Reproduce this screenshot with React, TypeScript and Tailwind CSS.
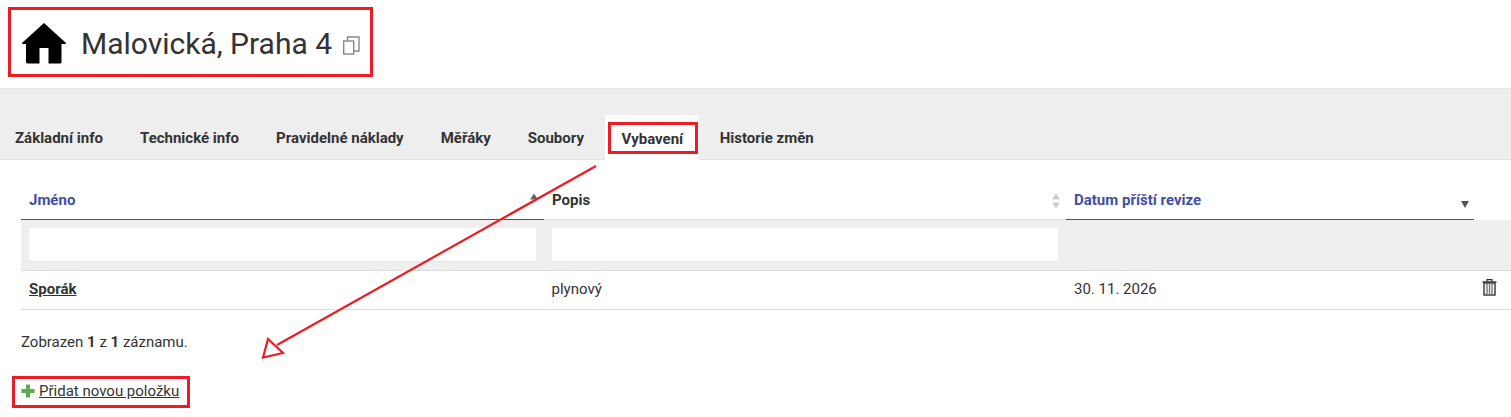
import React from 'react';

const tabs = ['Základní info', 'Technické info', 'Pravidelné náklady', 'Měřáky', 'Soubory', 'Vybavení', 'Historie změn'];

const SortIcon: React.FC<{ up?: string; down?: string }> = ({ up = '#cccccc', down = '#cccccc' }) => (
	<svg width="10" height="16" viewBox="0 0 10 16">
		<path d="M5 0.5 L9 6.5 H1 Z" fill={up} />
		<path d="M5 15.5 L9 9.5 H1 Z" fill={down} />
	</svg>
);

const App: React.FC = () => {
	return (
		<main className="relative h-[417px] w-[1511px] overflow-hidden bg-white font-['Roboto',sans-serif] text-[15px] leading-5 text-[#333333]">
			<header className="flex h-[89px] items-center border-b border-[#e6e6e6] pl-[21.5px]">
				<svg width="44" height="41" viewBox="0 0 44 41" className="mt-[-1px]">
					<path
						d="M22 0 L44 20 Q44 21 43 21 H39.5 V39 Q39.5 40.5 38 40.5 H26.5 V25 H17.5 V40.5 H6 Q4 40.5 4 39 V21 H1 Q0 21 0 20 Z"
						fill="#000000"
					/>
				</svg>
				<h1 className="ml-[15.5px] text-[30px] leading-none font-normal">Malovická, Praha 4</h1>
				<svg width="17" height="19" viewBox="0 0 17 19" className="mt-[3px] ml-[11px]" fill="none" stroke="#888888" strokeWidth="1.4">
					<path d="M4.5 4.5 V1 H16 V15 H10.5" />
					<rect x="0.7" y="5" width="10" height="13" fill="#ffffff" />
				</svg>
			</header>

			<nav className="flex h-[71px] items-end border-b border-[#e3e3e3] bg-[#eeeeee] pl-[15px]">
				{tabs.map((tab) =>
					tab === 'Vybavení' ? (
						<div key={tab} className="mr-[20.5px] mb-[-1px] ml-[-16px] flex h-[45px] items-center bg-white pt-[3px] pr-[16px] pl-[16.5px] leading-none font-bold">
							{tab}
						</div>
					) : (
						<div key={tab} className="mr-[37px] flex h-[44px] items-center pt-[2px] leading-none font-bold">
							{tab}
						</div>
					),
				)}
			</nav>

			<section className="pl-[21px]">
				<div className="grid h-[60px] grid-cols-[523px_522px_408px] pt-[21px] font-bold">
					<div className="flex items-start justify-between border-b border-[#3f4ea8] pt-[9px] pr-[5px] pl-[8px] text-[#3f4ea8]">
						<span>Jméno</span>
						<span className="mt-[3px]">
							<SortIcon up="#666666" down="transparent" />
						</span>
					</div>
					<div className="flex items-start justify-between border-b border-[#e0e0e0] pt-[9px] pr-[5px] pl-[8px]">
						<span>Popis</span>
						<span className="mt-[3px]">
							<SortIcon />
						</span>
					</div>
					<div className="flex items-start justify-between border-b border-[#3f4ea8] pt-[9px] pr-[5px] pl-[8px] text-[#3f4ea8]">
						<span>Datum příští revize</span>
						<svg width="8" height="7" viewBox="0 0 8 7" className="mt-[11px]">
							<path d="M4 7 L8 0 H0 Z" fill="#555555" />
						</svg>
					</div>
				</div>

				<div className="flex h-[51px] gap-[16px] border-b border-[#dddddd] bg-[#efefef] pt-[8px] pl-[8px]">
					<div className="h-[34px] w-[507px] border-b border-[#e6e6e6] bg-white" />
					<div className="h-[34px] w-[506px] border-b border-[#e6e6e6] bg-white" />
				</div>

				<div className="grid h-[39px] grid-cols-[523px_522px_1fr] items-center border-b border-[#dddddd] pb-[2px]">
					<a href="#" className="pl-[8px] font-bold underline">
						Sporák
					</a>
					<span className="pl-[7.5px]">plynový</span>
					<div className="flex items-center justify-between pr-[14px] pl-[8px]">
						<span>30. 11. 2026</span>
						<svg width="15" height="17" viewBox="0 0 15 17" fill="none" className="mt-[-3px]">
							<path d="M0.5 3 H14.5" stroke="#333333" strokeWidth="1.5" />
							<path d="M5 2.5 V0.7 H10 V2.5" stroke="#333333" strokeWidth="1.2" />
							<rect x="2" y="4" width="11" height="12" stroke="#333333" strokeWidth="1.4" fill="#ffffff" />
							<path d="M5 5 V15 M7.5 5 V15 M10 5 V15" stroke="#777777" strokeWidth="1.4" />
						</svg>
					</div>
				</div>

				<p className="mt-[23px] leading-[18px]">
					Zobrazen <b>1</b> z <b>1</b> záznamu.
				</p>

				<a href="#" className="mt-[30px] flex items-center leading-[20px]">
					<svg width="14" height="14" viewBox="0 0 14 14" className="mr-[4px]">
						<path d="M5 0.5 H9 V5 H13.5 V9 H9 V13.5 H5 V9 H0.5 V5 H5 Z" fill="#5cab4d" />
					</svg>
					<span className="underline">Přidat novou položku</span>
				</a>
			</section>

			{/* red annotations over the screenshot */}
			<div className="absolute top-[7px] left-[8px] h-[70px] w-[365px] border-[3px] border-[#ed1c24]" />
			<div className="absolute top-[122px] left-[608px] h-[32px] w-[90px] border-[3px] border-[#ed1c24]" />
			<div className="absolute top-[376px] left-[12px] h-[32px] w-[178px] border-[3px] border-[#ed1c24]" />
			<svg className="absolute top-0 left-0" width="1511" height="417" viewBox="0 0 1511 417" fill="none" stroke="#ed1c24" strokeWidth="2.2">
				<path d="M596 166 L277 345" />
				<path d="M268 339 L263 357.5 L283 353 Z" fill="#ffffff" />
			</svg>
		</main>
	);
};

export default App;
